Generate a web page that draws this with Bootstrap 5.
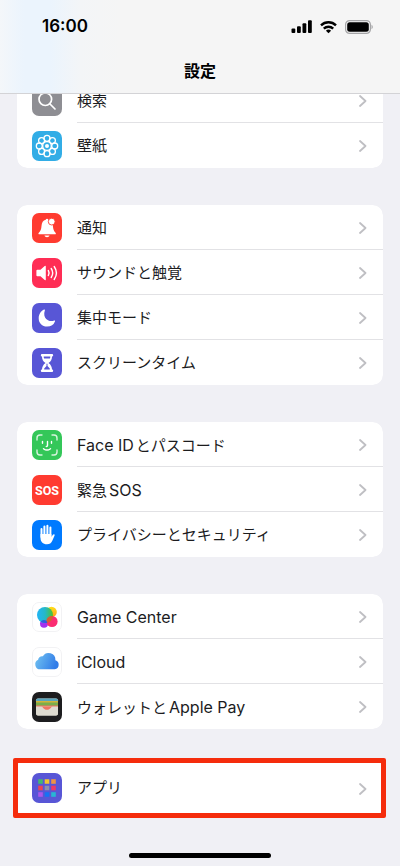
<!DOCTYPE html>
<html lang="ja">
<head>
<meta charset="utf-8">
<meta name="viewport" content="width=device-width, initial-scale=1">
<title>設定</title>
<link href="https://cdn.jsdelivr.net/npm/bootstrap@5.3.0/dist/css/bootstrap.min.css" rel="stylesheet">
<style>
  body { background: #f0f0f5; color: #1c1c1e; font-family: Inter, "Noto Sans CJK JP", sans-serif; font-size: 15px; }
  .top-bar { background: linear-gradient(90deg, #f4f7fa 0, #ebf4fd 24px, #ebf4fd 50px, #f3f5f7 80px, #f5f5f5 120px, #f5f5f5 100%); border-bottom: 1px solid #d3d3d6; height: 94px; color: #000; }
  .status { height: 53px; padding-left: 42px; padding-right: 27px; }
  .clock { font-size: 17px; font-weight: 600; }
  .page-title { font-size: 16px; font-weight: 700; line-height: 36px; }
  .settings { padding: 78px 17px 0; }
  .group { --bs-list-group-border-radius: 10px; --bs-list-group-border-width: 0; margin-bottom: 37px; overflow: hidden; }
  .entry { height: 45px; padding: 0 0 0 15px; gap: 15px; color: #1c1c1e; background: #fff; }
  .entry-body { height: 45px; padding-top: 2px; padding-right: 16px; border-bottom: 1px solid #e2e2e5; }
  .entry:last-child .entry-body { border-bottom-color: transparent; }
  .entry-label { display: flex; align-items: baseline; gap: 2px; }
  .tile { width: 30px; height: 30px; }
  .latin { font-size: 16px; }
  .group-marked { border: 5px solid #f52c0c; border-radius: 2px; margin: -8px -3px 0 -4px; }
  .group-marked .entry { height: 50px; padding-left: 14px; }
  .group-marked .entry-body { padding-right: 14px; }
  .home-bar { width: 142px; height: 5px; bottom: 8px; background: #000; }
</style>
<script src="https://cdn.jsdelivr.net/npm/bootstrap@5.3.0/dist/js/bootstrap.bundle.min.js"></script>
</head>
<body>
<svg class="d-none" aria-hidden="true">
  <symbol id="chevron" viewBox="0 0 8 14"><path d="M1 2l5.500 5L1 12" fill="none" stroke="#bfbfc3" stroke-width="1.800" stroke-linecap="round" stroke-linejoin="round"/></symbol>
</svg>

<header class="top-bar fixed-top">
  <div class="status d-flex align-items-center justify-content-between">
    <span class="clock">16:00</span>
    <div class="d-flex align-items-center gap-2">
      <svg width="21" height="14" viewBox="0 0 21 14" role="img" aria-label="電波"><rect x="0.500" y="8.500" width="3.800" height="4.500" rx="1"/><rect x="6" y="6.200" width="3.800" height="6.800" rx="1"/><rect x="11.500" y="3.300" width="3.800" height="9.700" rx="1"/><rect x="17" y="0.300" width="3.800" height="12.700" rx="1"/></svg>
      <svg width="17" height="14" viewBox="0 0 17 14" role="img" aria-label="Wi-Fi"><g fill="none" stroke="#000" stroke-width="2.400"><path d="M1 5.300a10.800 10.800 0 0 1 15 0"/><path d="M3.800 8.600a6.800 6.800 0 0 1 9.400 0"/></g><path d="M8.500 13.200L5.900 10.800a3.800 3.800 0 0 1 5.200 0z"/></svg>
      <svg width="28" height="14" viewBox="0 0 28 14" role="img" aria-label="バッテリー"><rect x=".6" y=".6" width="24.800" height="12.800" rx="4" fill="none" stroke="#a5a5a7" stroke-width="1.200"/><rect x="2.200" y="2.200" width="21.600" height="9.600" rx="2.500"/><path d="M26.500 4.800v4.400c1.700-.7 1.700-3.700 0-4.400z" fill="#a5a5a7"/></svg>
    </div>
  </div>
  <h1 class="page-title text-center m-0">設定</h1>
</header>

<main class="settings">
  <nav class="list-group group">
    <a href="#search" class="entry list-group-item list-group-item-action d-flex align-items-center">
      <svg class="tile flex-shrink-0" viewBox="0 0 30 30"><rect width="30" height="30" rx="7" fill="#8e8e93"/><g fill="none" stroke="#fff" stroke-width="1.700" stroke-linecap="round"><circle cx="13.300" cy="13.200" r="6.300"/><path d="M18 18l5 5"/></g></svg>
      <span class="entry-body flex-grow-1 d-flex align-items-center justify-content-between"><span>検索</span><svg width="8" height="14"><use href="#chevron"/></svg></span>
    </a>
    <a href="#wallpaper" class="entry list-group-item list-group-item-action d-flex align-items-center">
      <svg class="tile flex-shrink-0" viewBox="0 0 30 30"><rect width="30" height="30" rx="7" fill="#32ade6"/><g fill="none" stroke="#fff" stroke-width="1.300"><circle cx="15" cy="7.300" r="3"/><circle cx="20.400" cy="9.600" r="3"/><circle cx="22.700" cy="15" r="3"/><circle cx="20.400" cy="20.400" r="3"/><circle cx="15" cy="22.700" r="3"/><circle cx="9.600" cy="20.400" r="3"/><circle cx="7.300" cy="15" r="3"/><circle cx="9.600" cy="9.600" r="3"/><circle cx="15" cy="15" r="4.300"/></g><circle cx="15" cy="15" r="2" fill="#fff"/></svg>
      <span class="entry-body flex-grow-1 d-flex align-items-center justify-content-between"><span>壁紙</span><svg width="8" height="14"><use href="#chevron"/></svg></span>
    </a>
  </nav>

  <nav class="list-group group">
    <a href="#notifications" class="entry list-group-item list-group-item-action d-flex align-items-center">
      <svg class="tile flex-shrink-0" viewBox="0 0 30 30"><rect width="30" height="30" rx="7" fill="#ff3b30"/><path d="M6.800 21.200c-.5 0-.5-1 0-1.500 1.700-1.700 2.500-3 2.700-6.700.2-3.600 1.600-5.700 4.200-6.300.3-1.200 2.300-1.200 2.700 0l4.200 3.300c.2 1 .2 2 .3 3 .3 3.700 1 5 2.600 6.700.5.500.5 1.500 0 1.500z" fill="#fff"/><path d="M12.500 22.500h5c-.4 2.300-4.600 2.300-5 0z" fill="#fff"/><circle cx="19.700" cy="8.600" r="3.400" fill="#fff" stroke="#ff3b30" stroke-width=".9"/></svg>
      <span class="entry-body flex-grow-1 d-flex align-items-center justify-content-between"><span>通知</span><svg width="8" height="14"><use href="#chevron"/></svg></span>
    </a>
    <a href="#sounds" class="entry list-group-item list-group-item-action d-flex align-items-center">
      <svg class="tile flex-shrink-0" viewBox="0 0 30 30"><rect width="30" height="30" rx="7" fill="#ff2d55"/><path d="M5.300 11.800h3.200L12.700 8q1.100-.8 1.100.5v13q0 1.300-1.100.5l-4.200-3.800H5.300q-.9 0-.9-.9v-4.600q0-.9.900-.9z" fill="#fff"/><g fill="none" stroke="#fff" stroke-width="1.400" stroke-linecap="round"><path d="M16.300 12.500q1.600 2.500 0 5"/><path d="M19.200 10.500q3 4.500 0 9"/><path d="M22.200 8.500q4.500 6.500 0 13"/></g></svg>
      <span class="entry-body flex-grow-1 d-flex align-items-center justify-content-between"><span>サウンドと触覚</span><svg width="8" height="14"><use href="#chevron"/></svg></span>
    </a>
    <a href="#focus" class="entry list-group-item list-group-item-action d-flex align-items-center">
      <svg class="tile flex-shrink-0" viewBox="0 0 30 30"><rect width="30" height="30" rx="7" fill="#5856d6"/><path d="M12.200 6.600c.5-.2.900.2.700.7-1.400 4-.4 7 1.300 8.800 2.100 2 4.800 2.600 8.100 1.400.5-.2 1 .2.800.7A8.600 8.600 0 0 1 15 23.600c-4.800 0-8.300-3.700-8.300-8.200 0-4 2.100-7.400 5.500-8.800z" fill="#fff"/></svg>
      <span class="entry-body flex-grow-1 d-flex align-items-center justify-content-between"><span>集中モード</span><svg width="8" height="14"><use href="#chevron"/></svg></span>
    </a>
    <a href="#screentime" class="entry list-group-item list-group-item-action d-flex align-items-center">
      <svg class="tile flex-shrink-0" viewBox="0 0 30 30"><rect width="30" height="30" rx="7" fill="#5856d6"/><path d="M10 6h10q1.200 0 1.200 1.200T20 8.400c0 3.200-1 4.700-3.500 6.600Q20 17.500 20 21.600q1.200 0 1.200 1.200T20 24H10q-1.200 0-1.200-1.200t1.200-1.200Q10 17.500 13.500 15C11 13.100 10 11.600 10 8.400q-1.200 0-1.200-1.200T10 6z" fill="#fff"/><path d="M11.700 8.400h6.600q0 1.300-.4 2h-5.800q-.4-.7-.4-2zM14.500 15.800h1v2.300l2.300 2.500v.8h-5.600v-.8l2.300-2.500z" fill="#5856d6"/></svg>
      <span class="entry-body flex-grow-1 d-flex align-items-center justify-content-between"><span>スクリーンタイム</span><svg width="8" height="14"><use href="#chevron"/></svg></span>
    </a>
  </nav>

  <nav class="list-group group">
    <a href="#faceid" class="entry list-group-item list-group-item-action d-flex align-items-center">
      <svg class="tile flex-shrink-0" viewBox="0 0 30 30"><rect width="30" height="30" rx="7" fill="#34c759"/><g fill="none" stroke="#fff" stroke-width="1.400" stroke-linecap="round" stroke-linejoin="round"><path d="M5 10V8q0-3 3-3h2M20 5h2q3 0 3 3v2M25 20v2q0 3-3 3h-2M10 25H8q-3 0-3-3v-2" stroke-opacity=".8"/><path d="M10.500 11.500v1.700M19.500 11.500v1.700M15.500 11.500v4q0 1-1.200 1M11.500 18.700q3.500 2.700 7 0"/></g></svg>
      <span class="entry-body flex-grow-1 d-flex align-items-center justify-content-between"><span class="entry-label"><span class="latin">Face ID</span> <span>とパスコード</span></span><svg width="8" height="14"><use href="#chevron"/></svg></span>
    </a>
    <a href="#sos" class="entry list-group-item list-group-item-action d-flex align-items-center">
      <svg class="tile flex-shrink-0" viewBox="0 0 30 30"><rect width="30" height="30" rx="7" fill="#ff3b30"/><text x="15" y="19.500" text-anchor="middle" font-family="Roboto, sans-serif" font-size="12.500" font-weight="700" fill="#fff">SOS</text></svg>
      <span class="entry-body flex-grow-1 d-flex align-items-center justify-content-between"><span class="entry-label"><span>緊急</span> <span class="latin">SOS</span></span><svg width="8" height="14"><use href="#chevron"/></svg></span>
    </a>
    <a href="#privacy" class="entry list-group-item list-group-item-action d-flex align-items-center">
      <svg class="tile flex-shrink-0" viewBox="0 0 30 30"><rect width="30" height="30" rx="7" fill="#007aff"/><g fill="none" stroke="#fff" stroke-width="2" stroke-linecap="round"><path d="M9.500 9v8M12.400 6.500V16M15.400 5.700V16M18.400 7.500V17"/></g><path d="M8.500 14h10.900v3l1.500-2.200c.7-1 2-.5 1.700.6l-2.300 5.300c-1 2.400-2.700 3.600-5.300 3.600-4.200 0-6.500-2.600-6.500-6.500z" fill="#fff"/></svg>
      <span class="entry-body flex-grow-1 d-flex align-items-center justify-content-between"><span>プライバシーとセキュリティ</span><svg width="8" height="14"><use href="#chevron"/></svg></span>
    </a>
  </nav>

  <nav class="list-group group">
    <a href="#gamecenter" class="entry list-group-item list-group-item-action d-flex align-items-center">
      <svg class="tile flex-shrink-0" viewBox="0 0 30 30"><defs><linearGradient id="gc-blue" x1="0" y1="0" x2="1" y2="0"><stop offset="0" stop-color="#22b5f5"/><stop offset=".5" stop-color="#25b8c9"/><stop offset="1" stop-color="#4cc32c"/></linearGradient><linearGradient id="gc-yellow" x1="0" y1="0" x2="0" y2="1"><stop offset="0" stop-color="#ffe01a"/><stop offset="1" stop-color="#ff9d18"/></linearGradient></defs><rect x=".5" y=".5" width="29" height="29" rx="6.500" fill="#fff" stroke="#f2f2f4"/><circle cx="19.500" cy="10" r="5.300" fill="url(#gc-yellow)"/><circle cx="12" cy="21.700" r="4" fill="#a331ee"/><circle cx="13" cy="13" r="8" fill="url(#gc-blue)"/><circle cx="20" cy="19.500" r="5.600" fill="#fb2d72"/><path d="M14.600 18a5.600 5.600 0 0 1 6.400-4 8 8 0 0 1-6.500 7 5.600 5.600 0 0 1 .1-3z" fill="#d56032"/><path d="M8.700 19.500a4 4 0 0 1 6-.4l.7 1.700q-3.500.9-6.700-1.300z" fill="#315bdd"/></svg>
      <span class="entry-body flex-grow-1 d-flex align-items-center justify-content-between"><span class="latin">Game Center</span><svg width="8" height="14"><use href="#chevron"/></svg></span>
    </a>
    <a href="#icloud" class="entry list-group-item list-group-item-action d-flex align-items-center">
      <svg class="tile flex-shrink-0" viewBox="0 0 30 30"><defs><linearGradient id="cloud-fill" x1="0" y1="0" x2="1" y2=".3"><stop offset="0" stop-color="#74c5f1"/><stop offset="1" stop-color="#327de8"/></linearGradient></defs><rect x=".5" y=".5" width="29" height="29" rx="6.500" fill="#fff" stroke="#f2f2f4"/><path d="M8.200 22.300a5 5 0 0 1-2.100-9.500 4 4 0 0 1 4.700-3.500 6.800 6.800 0 0 1 12.600 3.900 4.700 4.700 0 0 1-.6 9.100z" fill="url(#cloud-fill)"/></svg>
      <span class="entry-body flex-grow-1 d-flex align-items-center justify-content-between"><span class="latin">iCloud</span><svg width="8" height="14"><use href="#chevron"/></svg></span>
    </a>
    <a href="#wallet" class="entry list-group-item list-group-item-action d-flex align-items-center">
      <svg class="tile flex-shrink-0" viewBox="0 0 30 30"><rect width="30" height="30" rx="7" fill="#1d1d1f"/><rect x="4" y="6.500" width="22" height="17" rx="2" fill="#dedbd1"/><path d="M4 9.800V8.500q0-2 2-2h18q2 0 2 2v1.300z" fill="#5aa5bd"/><path d="M4 9h22v3.500H4z" fill="#d2b43c"/><path d="M4 10.500h22v3.500H4z" fill="#79ae4b"/><path d="M4 13.500h22v1.500H4z" fill="#ef7563"/><path d="M4 14.500h22v7q0 2-2 2H6q-2 0-2-2z" fill="#dedbd1"/><path d="M9.500 14.500h11c-1.500.2-2 3.300-5.500 3.300s-4-3.100-5.500-3.300z" fill="#ef7563"/></svg>
      <span class="entry-body flex-grow-1 d-flex align-items-center justify-content-between"><span class="entry-label"><span>ウォレットと</span> <span class="latin">Apple Pay</span></span><svg width="8" height="14"><use href="#chevron"/></svg></span>
    </a>
  </nav>

  <nav class="list-group group group-marked">
    <a href="#apps" class="entry list-group-item list-group-item-action d-flex align-items-center">
      <svg class="tile flex-shrink-0" viewBox="0 0 30 30"><rect width="30" height="30" rx="7" fill="#5856d6"/><path d="M6.200 6.200h4.600v4.600H6.200z" fill="#43b872"/><path d="M12.700 6.200h4.600v4.600h-4.600z" fill="#f3c52f"/><path d="M19.200 6.200h4.600v4.600h-4.600z" fill="#ee9344"/><path d="M6.200 12.700h4.600v4.600H6.200z" fill="#ed4553"/><path d="M12.700 12.700h4.600v4.600h-4.600z" fill="#908fac"/><path d="M19.200 12.700h4.600v4.600h-4.600z" fill="#ed3968"/><path d="M6.200 19.200h4.600v4.600H6.200z" fill="#ab57eb"/><path d="M12.700 19.200h4.600v4.600h-4.600z" fill="#1673f3"/><path d="M19.200 19.200h4.600v4.600h-4.600z" fill="#28b6d4"/></svg>
      <span class="entry-body flex-grow-1 d-flex align-items-center justify-content-between"><span>アプリ</span><svg width="8" height="14"><use href="#chevron"/></svg></span>
    </a>
  </nav>
</main>

<div class="home-bar position-fixed start-50 translate-middle-x rounded-pill"></div>
</body>
</html>
